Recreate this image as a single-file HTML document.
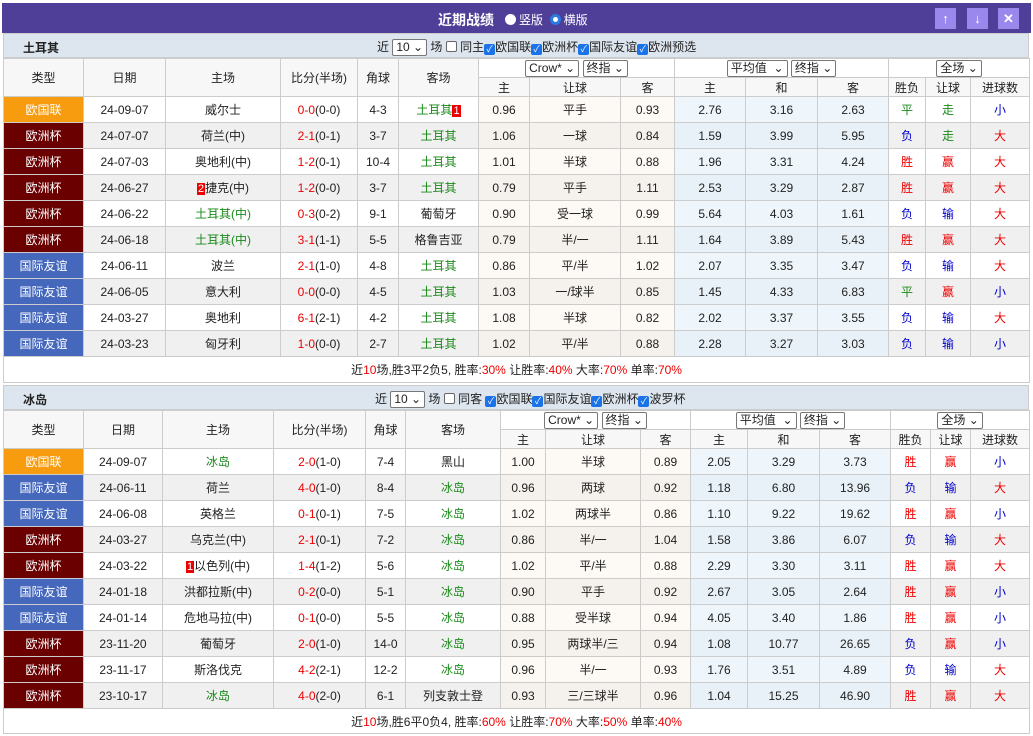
<!DOCTYPE html>
<html><head><meta charset="utf-8"><style>
*{box-sizing:border-box}
body{margin:0;width:1033px;height:736px;background:#fff;font-family:"Liberation Sans","Noto Sans CJK SC",sans-serif;font-size:12px;color:#222;overflow:hidden;position:relative}
.bar{position:absolute;left:2px;top:3px;width:1029px;height:30px;background:#4f3f99;color:#fff}
.bar .t{position:absolute;left:436px;top:7px;font-weight:bold;font-size:14px}
.rad{display:inline-block;width:11px;height:11px;border-radius:50%;background:#fff;vertical-align:-1px;margin-right:3px}
.rad.o{background:#fff;border:3px solid #2a7be0}
.bar .rv{position:absolute;left:503px;top:8px;font-size:12px;color:#fff}
.btn{position:absolute;top:5px;width:21px;height:21px;background:#9b88ec;color:#fff;text-align:center;font-weight:bold;line-height:21px;font-size:13px}
.sec{position:absolute;left:3px;width:1026px;background:#dde5ee;height:25px;border:1px solid #ccc}
.sec b{position:absolute;left:19px;top:5px;font-size:12px}
.sec .f{position:absolute;top:4px;font-size:12px;white-space:nowrap}
.sel{display:inline-block;border:1px solid #777;background:#fff;padding:0 3px;height:17px;line-height:15px;font-size:12px;border-radius:2px;vertical-align:middle}
.cb{display:inline-block;width:11px;height:11px;border:1px solid #666;background:#fff;vertical-align:-1px;border-radius:2px}
.ck{display:inline-block;width:11px;height:11px;background:#1a73e8;vertical-align:-1px;border-radius:2px;color:#fff;font-size:9px;line-height:11px;text-align:center}
table{position:absolute;left:3px;width:1026px;border-collapse:collapse;table-layout:fixed}
td{border:1px solid #ccc;text-align:center;height:26px;padding:0;white-space:nowrap;overflow:hidden}
tr.h td{height:19px;background:#f7f7f7}
tr.h td.x{background:#fff}
tr.g td{background:#f0f0f0}
td.c{background:#fdf9f5}
tr.g td.c{background:#f5f1ec}
td.b{background:#eef6fb}
tr.g td.b{background:#e8f1f7}
td.oz{background:#6b0000!important;color:#fff}
td.gj{background:#4567bc!important;color:#fff}
td.oj{background:#f89c0f!important;color:#fff}
.r{color:#e00}.gr{color:#1a8a1a}.bl{color:#00c}
.n{background:#e00;color:#fff;padding:0 1px;font-size:11px}
td.sum{height:26px;background:#fff}
</style></head><body>
<div class="bar"><span class="t">近期战绩</span><span class="rv"><span class="rad"></span>竖版 &nbsp;<span class="rad o"></span>横版</span>
<div class="btn" style="left:933px">↑</div><div class="btn" style="left:965px">↓</div><div class="btn" style="left:996px">✕</div></div>

<div class="sec" style="top:33px"><b>土耳其</b><span class="f" style="left:373px">近 <span class="sel">10 ⌄</span> 场 <span class="cb"></span> 同主<span class="ck">✓</span>欧国联<span class="ck">✓</span>欧洲杯<span class="ck">✓</span>国际友谊<span class="ck">✓</span>欧洲预选</span></div>

<table style="top:58px">
<colgroup><col style="width:80px"><col style="width:82px"><col style="width:115px"><col style="width:77px"><col style="width:41px"><col style="width:80px"><col style="width:51px"><col style="width:91px"><col style="width:54px"><col style="width:71px"><col style="width:72px"><col style="width:71px"><col style="width:37px"><col style="width:45px"><col style="width:59px"></colgroup>
<tr class="h"><td rowspan="2">类型</td><td rowspan="2">日期</td><td rowspan="2">主场</td><td rowspan="2">比分(半场)</td><td rowspan="2">角球</td><td rowspan="2">客场</td><td colspan="3" class="x"><span class="sel">Crow* ⌄</span> <span class="sel">终指 ⌄</span></td><td colspan="3" class="x"><span class="sel">平均值 &nbsp;⌄</span> <span class="sel">终指 ⌄</span></td><td colspan="3" class="x"><span class="sel">全场 ⌄</span></td></tr>
<tr class="h"><td>主</td><td>让球</td><td>客</td><td>主</td><td>和</td><td>客</td><td>胜负</td><td>让球</td><td>进球数</td></tr>
<tr><td class="oj">欧国联</td><td>24-09-07</td><td>威尔士</td><td><span class="r">0-0</span>(0-0)</td><td>4-3</td><td class="gr">土耳其<span class="n">1</span></td><td class="c">0.96</td><td class="c">平手</td><td class="c">0.93</td><td class="b">2.76</td><td class="b">3.16</td><td class="b">2.63</td><td class="gr">平</td><td class="gr">走</td><td class="bl">小</td></tr>
<tr class="g"><td class="oz">欧洲杯</td><td>24-07-07</td><td>荷兰(中)</td><td><span class="r">2-1</span>(0-1)</td><td>3-7</td><td class="gr">土耳其</td><td class="c">1.06</td><td class="c">一球</td><td class="c">0.84</td><td class="b">1.59</td><td class="b">3.99</td><td class="b">5.95</td><td class="bl">负</td><td class="gr">走</td><td class="r">大</td></tr>
<tr><td class="oz">欧洲杯</td><td>24-07-03</td><td>奥地利(中)</td><td><span class="r">1-2</span>(0-1)</td><td>10-4</td><td class="gr">土耳其</td><td class="c">1.01</td><td class="c">半球</td><td class="c">0.88</td><td class="b">1.96</td><td class="b">3.31</td><td class="b">4.24</td><td class="r">胜</td><td class="r">赢</td><td class="r">大</td></tr>
<tr class="g"><td class="oz">欧洲杯</td><td>24-06-27</td><td><span class="n">2</span>捷克(中)</td><td><span class="r">1-2</span>(0-0)</td><td>3-7</td><td class="gr">土耳其</td><td class="c">0.79</td><td class="c">平手</td><td class="c">1.11</td><td class="b">2.53</td><td class="b">3.29</td><td class="b">2.87</td><td class="r">胜</td><td class="r">赢</td><td class="r">大</td></tr>
<tr><td class="oz">欧洲杯</td><td>24-06-22</td><td class="gr">土耳其(中)</td><td><span class="r">0-3</span>(0-2)</td><td>9-1</td><td>葡萄牙</td><td class="c">0.90</td><td class="c">受一球</td><td class="c">0.99</td><td class="b">5.64</td><td class="b">4.03</td><td class="b">1.61</td><td class="bl">负</td><td class="bl">输</td><td class="r">大</td></tr>
<tr class="g"><td class="oz">欧洲杯</td><td>24-06-18</td><td class="gr">土耳其(中)</td><td><span class="r">3-1</span>(1-1)</td><td>5-5</td><td>格鲁吉亚</td><td class="c">0.79</td><td class="c">半/一</td><td class="c">1.11</td><td class="b">1.64</td><td class="b">3.89</td><td class="b">5.43</td><td class="r">胜</td><td class="r">赢</td><td class="r">大</td></tr>
<tr><td class="gj">国际友谊</td><td>24-06-11</td><td>波兰</td><td><span class="r">2-1</span>(1-0)</td><td>4-8</td><td class="gr">土耳其</td><td class="c">0.86</td><td class="c">平/半</td><td class="c">1.02</td><td class="b">2.07</td><td class="b">3.35</td><td class="b">3.47</td><td class="bl">负</td><td class="bl">输</td><td class="r">大</td></tr>
<tr class="g"><td class="gj">国际友谊</td><td>24-06-05</td><td>意大利</td><td><span class="r">0-0</span>(0-0)</td><td>4-5</td><td class="gr">土耳其</td><td class="c">1.03</td><td class="c">一/球半</td><td class="c">0.85</td><td class="b">1.45</td><td class="b">4.33</td><td class="b">6.83</td><td class="gr">平</td><td class="r">赢</td><td class="bl">小</td></tr>
<tr><td class="gj">国际友谊</td><td>24-03-27</td><td>奥地利</td><td><span class="r">6-1</span>(2-1)</td><td>4-2</td><td class="gr">土耳其</td><td class="c">1.08</td><td class="c">半球</td><td class="c">0.82</td><td class="b">2.02</td><td class="b">3.37</td><td class="b">3.55</td><td class="bl">负</td><td class="bl">输</td><td class="r">大</td></tr>
<tr class="g"><td class="gj">国际友谊</td><td>24-03-23</td><td>匈牙利</td><td><span class="r">1-0</span>(0-0)</td><td>2-7</td><td class="gr">土耳其</td><td class="c">1.02</td><td class="c">平/半</td><td class="c">0.88</td><td class="b">2.28</td><td class="b">3.27</td><td class="b">3.03</td><td class="bl">负</td><td class="bl">输</td><td class="bl">小</td></tr>
<tr><td colspan="15" class="sum">近<span class="r">10</span>场,胜3平2负5, 胜率:<span class="r">30%</span> 让胜率:<span class="r">40%</span> 大率:<span class="r">70%</span> 单率:<span class="r">70%</span></td></tr>
</table>

<div class="sec" style="top:385px"><b>冰岛</b><span class="f" style="left:371px">近 <span class="sel">10 ⌄</span> 场 <span class="cb"></span> 同客 <span class="ck">✓</span>欧国联<span class="ck">✓</span>国际友谊<span class="ck">✓</span>欧洲杯<span class="ck">✓</span>波罗杯</span></div>

<table style="top:410px">
<colgroup><col style="width:80px"><col style="width:79px"><col style="width:111px"><col style="width:92px"><col style="width:40px"><col style="width:95px"><col style="width:45px"><col style="width:95px"><col style="width:50px"><col style="width:57px"><col style="width:72px"><col style="width:71px"><col style="width:40px"><col style="width:40px"><col style="width:59px"></colgroup>
<tr class="h"><td rowspan="2">类型</td><td rowspan="2">日期</td><td rowspan="2">主场</td><td rowspan="2">比分(半场)</td><td rowspan="2">角球</td><td rowspan="2">客场</td><td colspan="3" class="x"><span class="sel">Crow* ⌄</span> <span class="sel">终指 ⌄</span></td><td colspan="3" class="x"><span class="sel">平均值 &nbsp;⌄</span> <span class="sel">终指 ⌄</span></td><td colspan="3" class="x"><span class="sel">全场 ⌄</span></td></tr>
<tr class="h"><td>主</td><td>让球</td><td>客</td><td>主</td><td>和</td><td>客</td><td>胜负</td><td>让球</td><td>进球数</td></tr>
<tr><td class="oj">欧国联</td><td>24-09-07</td><td class="gr">冰岛</td><td><span class="r">2-0</span>(1-0)</td><td>7-4</td><td>黑山</td><td class="c">1.00</td><td class="c">半球</td><td class="c">0.89</td><td class="b">2.05</td><td class="b">3.29</td><td class="b">3.73</td><td class="r">胜</td><td class="r">赢</td><td class="bl">小</td></tr>
<tr class="g"><td class="gj">国际友谊</td><td>24-06-11</td><td>荷兰</td><td><span class="r">4-0</span>(1-0)</td><td>8-4</td><td class="gr">冰岛</td><td class="c">0.96</td><td class="c">两球</td><td class="c">0.92</td><td class="b">1.18</td><td class="b">6.80</td><td class="b">13.96</td><td class="bl">负</td><td class="bl">输</td><td class="r">大</td></tr>
<tr><td class="gj">国际友谊</td><td>24-06-08</td><td>英格兰</td><td><span class="r">0-1</span>(0-1)</td><td>7-5</td><td class="gr">冰岛</td><td class="c">1.02</td><td class="c">两球半</td><td class="c">0.86</td><td class="b">1.10</td><td class="b">9.22</td><td class="b">19.62</td><td class="r">胜</td><td class="r">赢</td><td class="bl">小</td></tr>
<tr class="g"><td class="oz">欧洲杯</td><td>24-03-27</td><td>乌克兰(中)</td><td><span class="r">2-1</span>(0-1)</td><td>7-2</td><td class="gr">冰岛</td><td class="c">0.86</td><td class="c">半/一</td><td class="c">1.04</td><td class="b">1.58</td><td class="b">3.86</td><td class="b">6.07</td><td class="bl">负</td><td class="bl">输</td><td class="r">大</td></tr>
<tr><td class="oz">欧洲杯</td><td>24-03-22</td><td><span class="n">1</span>以色列(中)</td><td><span class="r">1-4</span>(1-2)</td><td>5-6</td><td class="gr">冰岛</td><td class="c">1.02</td><td class="c">平/半</td><td class="c">0.88</td><td class="b">2.29</td><td class="b">3.30</td><td class="b">3.11</td><td class="r">胜</td><td class="r">赢</td><td class="r">大</td></tr>
<tr class="g"><td class="gj">国际友谊</td><td>24-01-18</td><td>洪都拉斯(中)</td><td><span class="r">0-2</span>(0-0)</td><td>5-1</td><td class="gr">冰岛</td><td class="c">0.90</td><td class="c">平手</td><td class="c">0.92</td><td class="b">2.67</td><td class="b">3.05</td><td class="b">2.64</td><td class="r">胜</td><td class="r">赢</td><td class="bl">小</td></tr>
<tr><td class="gj">国际友谊</td><td>24-01-14</td><td>危地马拉(中)</td><td><span class="r">0-1</span>(0-0)</td><td>5-5</td><td class="gr">冰岛</td><td class="c">0.88</td><td class="c">受半球</td><td class="c">0.94</td><td class="b">4.05</td><td class="b">3.40</td><td class="b">1.86</td><td class="r">胜</td><td class="r">赢</td><td class="bl">小</td></tr>
<tr class="g"><td class="oz">欧洲杯</td><td>23-11-20</td><td>葡萄牙</td><td><span class="r">2-0</span>(1-0)</td><td>14-0</td><td class="gr">冰岛</td><td class="c">0.95</td><td class="c">两球半/三</td><td class="c">0.94</td><td class="b">1.08</td><td class="b">10.77</td><td class="b">26.65</td><td class="bl">负</td><td class="r">赢</td><td class="bl">小</td></tr>
<tr><td class="oz">欧洲杯</td><td>23-11-17</td><td>斯洛伐克</td><td><span class="r">4-2</span>(2-1)</td><td>12-2</td><td class="gr">冰岛</td><td class="c">0.96</td><td class="c">半/一</td><td class="c">0.93</td><td class="b">1.76</td><td class="b">3.51</td><td class="b">4.89</td><td class="bl">负</td><td class="bl">输</td><td class="r">大</td></tr>
<tr class="g"><td class="oz">欧洲杯</td><td>23-10-17</td><td class="gr">冰岛</td><td><span class="r">4-0</span>(2-0)</td><td>6-1</td><td>列支敦士登</td><td class="c">0.93</td><td class="c">三/三球半</td><td class="c">0.96</td><td class="b">1.04</td><td class="b">15.25</td><td class="b">46.90</td><td class="r">胜</td><td class="r">赢</td><td class="r">大</td></tr>
<tr><td colspan="15" class="sum" style="height:25px">近<span class="r">10</span>场,胜6平0负4, 胜率:<span class="r">60%</span> 让胜率:<span class="r">70%</span> 大率:<span class="r">50%</span> 单率:<span class="r">40%</span></td></tr>
</table>
</body></html>
